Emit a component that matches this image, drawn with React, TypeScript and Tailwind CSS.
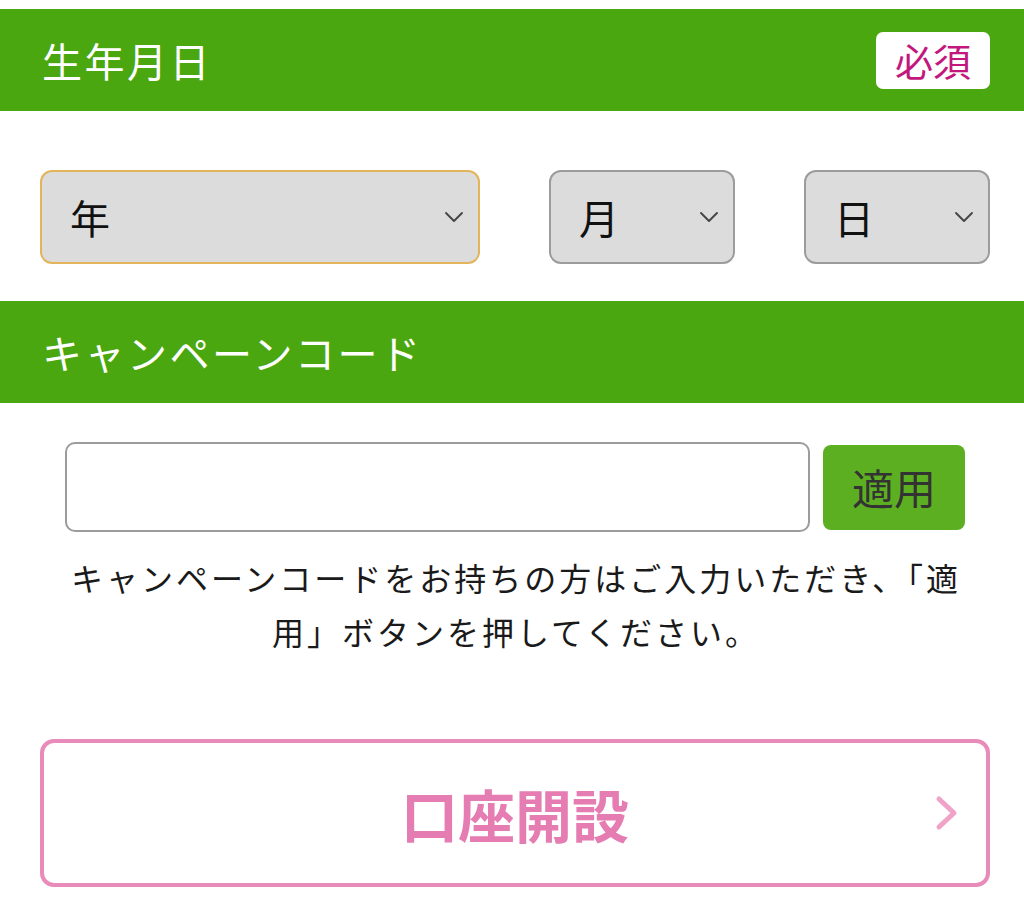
import { ChevronDown } from "lucide-react";

function SectionBar({ title, required }: { title: string; required?: boolean }) {
  return (
    <div className="flex h-[102px] items-center justify-between bg-[#4ba70f] pl-[42px] pr-[34px]">
      <h2 className="text-[40px] font-normal tracking-[2.5px] text-white">{title}</h2>
      {required && (
        <span className="flex h-[57px] w-[114px] items-center justify-center rounded-[7px] bg-white text-[38px] leading-none text-[#c2177c]">
          必須
        </span>
      )}
    </div>
  );
}

function Select({ label, className }: { label: string; className: string }) {
  return (
    <div
      className={`flex h-[94px] items-center justify-between rounded-[12px] border-2 bg-[#dcdcdc] pl-[28px] pr-[8px] ${className}`}
    >
      <span className="text-[40px] leading-none text-[#111]">{label}</span>
      <ChevronDown className="h-[32px] w-[32px] text-[#444]" strokeWidth={1.4} />
    </div>
  );
}

export default function App() {
  return (
    <div className="min-h-[908px] w-[1024px] bg-white pt-[9px] font-['Noto_Sans_CJK_JP','Noto_Sans',sans-serif]">
      <SectionBar title="生年月日" required />

      <div className="flex justify-between pb-[37px] pl-[40px] pr-[34px] pt-[59px]">
        <Select label="年" className="w-[440px] border-[#e3b45c]" />
        <Select label="月" className="w-[186px] border-[#9c9c9c]" />
        <Select label="日" className="w-[186px] border-[#9c9c9c]" />
      </div>

      <SectionBar title="キャンペーンコード" />

      <div className="pl-[65px] pr-[59px] pt-[39px]">
        <div className="flex items-center gap-[13px]">
          <input
            type="text"
            className="h-[90px] w-[745px] rounded-[10px] border-2 border-[#9c9c9c] bg-white px-4 text-[32px] outline-none"
          />
          <button className="flex h-[85px] w-[142px] items-center justify-center rounded-[8px] bg-[#5daf22] text-[42px] leading-none text-[#333]">
            適用
          </button>
        </div>
      </div>
      <p className="mx-auto mt-[18px] w-[930px] pl-[8px] text-center text-[32px] leading-[54px] tracking-[3px] text-[#1a1a1a]">
        キャンペーンコードをお持ちの方はご入力いただき、「適用」ボタンを押してください。
      </p>

      <div className="pl-[40px] pr-[34px] pt-[81px]">
        <button className="relative flex h-[148px] w-full items-center justify-center rounded-[14px] border-4 border-[#e98bb9] bg-white">
          <span className="text-[57px] font-bold leading-none text-[#e57db2]">口座開設</span>
          <svg
            className="absolute right-[26px] top-1/2 h-[40px] w-[26px] -translate-y-1/2"
            viewBox="0 0 26 40"
            fill="none"
          >
            <path d="M5 6 L20 20 L5 34" stroke="#f0a3c6" strokeWidth="5" strokeLinecap="round" strokeLinejoin="round" />
          </svg>
        </button>
      </div>
    </div>
  );
}
